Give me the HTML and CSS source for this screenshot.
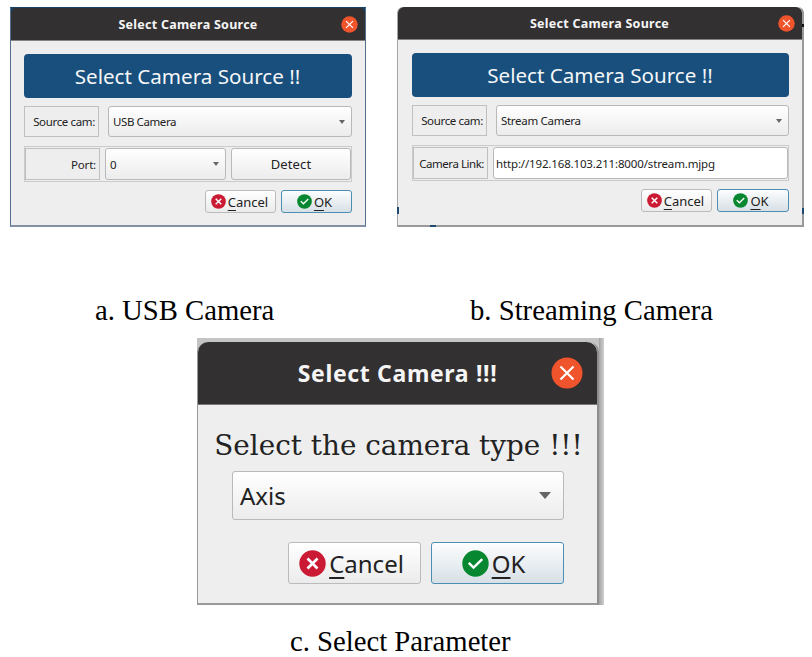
FILE: index.html
```
<!DOCTYPE html>
<html lang="en">
<head>
<meta charset="utf-8">
<title>Camera dialogs</title>
<link rel="stylesheet" href="styles.css">
</head>
<body>
<svg width="0" height="0" class="defs" aria-hidden="true">
  <symbol id="close" viewBox="0 0 32 32"><circle cx="16" cy="16" r="15.5" fill="#f0542c"/><path d="M9.5 9.5l13 13M22.5 9.5l-13 13" stroke="#fff" stroke-width="2.2" fill="none"/></symbol>
  <symbol id="no" viewBox="0 0 28 28"><circle cx="14" cy="14" r="13.7" fill="#cb1b34"/><path d="M8.8 8.8l10.4 10.4M19.2 8.8L8.800 19.2" stroke="#fff" stroke-width="2.8" fill="none"/></symbol>
  <symbol id="yes" viewBox="0 0 28 28"><circle cx="14" cy="14" r="13.7" fill="#07872f"/><path d="M7 13.300l5 5 9-8.800" stroke="#fff" stroke-width="2.5" fill="none"/></symbol>
</svg>
<main class="page">
  <div class="pair">
    <figure>
      <section class="dialog usb">
        <header class="bar"><span class="title">Select Camera Source</span><svg class="close"><use href="#close"/></svg></header>
        <div class="body">
          <div class="banner"><span>Select Camera Source !!</span></div>
          <div class="row"><div class="label"><span class="t-source">Source cam:</span></div><div class="field combo"><span class="t-usb">USB Camera</span><i class="arrow"></i></div></div>
          <div class="group"><div class="label"><span class="t-port">Port:</span></div><div class="field combo port"><span>0</span><i class="arrow"></i></div><div class="field detect"><span>Detect</span></div></div>
          <div class="actions"><div class="btn"><svg><use href="#no"/></svg><span class="t-cancel"><u>C</u>ancel</span></div><div class="btn ok"><svg><use href="#yes"/></svg><span class="t-ok"><u>O</u>K</span></div></div>
        </div>
      </section>
      <figcaption class="cap-a">a. USB Camera</figcaption>
    </figure>
    <figure>
      <section class="dialog stream">
        <header class="bar"><span class="title">Select Camera Source</span><svg class="close"><use href="#close"/></svg></header>
        <div class="body">
          <div class="banner"><span>Select Camera Source !!</span></div>
          <div class="row"><div class="label"><span class="t-source">Source cam:</span></div><div class="field combo"><span class="t-stream">Stream Camera</span><i class="arrow"></i></div></div>
          <div class="group"><div class="label"><span class="t-link">Camera Link:</span></div><div class="field input"><span class="t-url">http://192.168.103.211:8000/stream.mjpg</span></div></div>
          <div class="actions"><div class="btn"><svg><use href="#no"/></svg><span class="t-cancel"><u>C</u>ancel</span></div><div class="btn ok"><svg><use href="#yes"/></svg><span class="t-ok"><u>O</u>K</span></div></div>
        </div>
        <i class="speck s1"></i><i class="speck s2"></i><i class="speck s3"></i><i class="speck s4"></i>
      </section>
      <figcaption class="cap-b">b. Streaming Camera</figcaption>
    </figure>
  </div>
  <figure class="third">
    <div class="shade">
      <section class="large">
        <header class="bar"><span class="title">Select Camera !!!</span><svg class="close"><use href="#close"/></svg></header>
        <div class="body">
          <p class="prompt">Select the camera type !!!</p>
          <div class="field combo"><span class="t-axis">Axis</span><i class="arrow"></i></div>
          <div class="actions"><div class="btn"><svg><use href="#no"/></svg><span class="t-cancel"><u>C</u>ancel</span></div><div class="btn ok"><svg><use href="#yes"/></svg><span class="t-ok"><u>O</u>K</span></div></div>
        </div>
      </section>
    </div>
    <figcaption class="cap-c">c. Select Parameter</figcaption>
  </figure>
</main>
</body>
</html>
```
FILE: styles.css
```
* { box-sizing: border-box; }
body { margin: 0; background: #fff; overflow: hidden; font-family: "Noto Sans", sans-serif; color: #222; }
.defs { position: absolute; }
.page { width: 812px; height: 657px; padding-top: 7px; }
figure { margin: 0; }
span, figcaption, .prompt { white-space: nowrap; }
.pair { display: flex; gap: 31px; padding-left: 10px; height: 331px; }
figcaption { font: 28.7px/34px "Liberation Serif", serif; color: #000; }
.cap-a { margin: 66px 0 0 85px; }
.cap-b { margin: 66px 0 0 73px; }
.cap-c { margin: 19px 0 0 93px; }

.dialog { height: 220px; background: #eee; position: relative; font-size: 11.5px; }
.usb { width: 356px; background: linear-gradient(#174267 0 10px, #eee 10px); border: 1px solid #53718e; border-top-color: #174267; border-bottom: 2px solid #8292a3; }
.stream { width: 407px; border: 1px solid #a5a5a5; border-right: 2px solid #999; border-bottom: 2px solid #999; border-top: 0; border-radius: 6px 6px 0 0; }
.bar { display: flex; align-items: center; justify-content: center; position: relative; background: #333031; color: #f5f5f5; font-weight: 700; }
.dialog .bar { height: 33px; border-bottom: 1px solid #858381; border-radius: 5px 5px 0 0; font-size: 12.5px; letter-spacing: .26px; }
.close { position: absolute; }
.dialog .close { width: 17px; height: 17px; right: 7px; top: 8px; }
.dialog .body { padding: 13px 13px 0; }
.stream .bar { border-radius: 6px 6px 0 0; }
.stream .title { margin-right: 1px; }
.stream .body { padding: 13px 13px 0 14px; }
.banner { height: 44px; border-radius: 4px; background: #184f7c; color: #f4f6f8; font-size: 20.6px; display: flex; align-items: center; justify-content: center; }
.banner span { margin-right: 1px; }
.row { display: flex; gap: 9px; margin-top: 8px; height: 31px; }
.group { display: flex; gap: 5px; margin-top: 9px; height: 36px; padding: 1px 0; border: 1px solid #cbcbcb; }
.label { width: 75px; border: 1px solid #c0c0c0; display: flex; align-items: center; justify-content: flex-end; padding-right: 3px; }
.field { flex: 1; border: 1px solid #b9b9b9; border-radius: 3px; background: linear-gradient(#fff, #ececec); display: flex; align-items: center; padding-left: 4px; }
.combo { justify-content: space-between; padding-right: 6px; }
.arrow { border: 3.5px solid transparent; border-top: 4px solid #666; border-bottom: 0; }
.port { flex: none; width: 121px; }
.detect { justify-content: center; padding: 0; font-size: 13px; letter-spacing: .15px; }
.input { background: #fff; padding-left: 2px; }
.t-source { letter-spacing: -.35px; }
.t-usb { letter-spacing: -.4px; }
.t-stream { letter-spacing: -.3px; }
.t-link { letter-spacing: -.45px; }
.t-port { letter-spacing: -.2px; }
.t-url { letter-spacing: -.15px; }
.actions { display: flex; justify-content: flex-end; gap: 5px; margin-top: 8px; }
.btn { width: 71px; height: 23px; border: 1px solid #bbb; border-radius: 3px; background: linear-gradient(#fff, #ebebeb); display: flex; align-items: center; justify-content: center; gap: 2px; padding-right: 2px; font-size: 13px; }
.btn svg { width: 15px; height: 15px; flex: none; }
.btn.ok { border-color: #4d8fb3; background: linear-gradient(#fcfdfe, #d7e0e6); padding-right: 4px; }
.stream .btn.ok { width: 72px; }
.btn u { text-decoration-thickness: 1px; text-underline-offset: 3px; }

.speck { position: absolute; background: #214a73; }
.s1 { left: -1px; top: 200px; width: 2px; height: 7px; }
.s2 { left: 32px; top: 218px; width: 6px; height: 2px; }
.s3 { right: -2px; top: 201px; width: 2px; height: 6px; }
.s4 { right: -2px; top: 17px; width: 2px; height: 3px; background: #111; }

.third { margin-left: 197px; width: 407px; }
.shade { height: 267px; padding: 4px 5px 0 0; background: linear-gradient(90deg, #c4c4c4 0, #c4c4c4 402px, #a3a3a3 402px, #d0d0d0); }
.large { height: 263px; border: 1px solid #999; border-top: 0; border-bottom: 2px solid #999; border-right: 2px solid #8f8f8f; border-radius: 10px 10px 0 0; background: #eee; font-size: 24px; }
.large .bar { height: 63px; border-bottom: 1px solid #777; border-radius: 10px 10px 0 0; font-size: 23px; letter-spacing: .65px; }
.large .close { width: 32px; height: 32px; right: 14px; top: 15px; }
.large .body { padding: 0 33px 0 34px; }
.prompt { font: 27.85px/32px "DejaVu Serif", serif; margin: 25px -20px 0 -19px; text-align: center; }
.large .field { height: 49px; margin-top: 9px; padding-left: 7px; padding-right: 12px; }
.large .arrow { border-width: 7px 6.5px 0; }
.large .actions { margin-top: 22px; gap: 10px; }
.large .btn { width: 133px; height: 42px; gap: 3px; padding-right: 6px; font-size: 24px; }
.large .btn.ok { padding-right: 8px; }
.large .btn svg { width: 27px; height: 27px; }
.large .btn u { text-decoration-thickness: 2px; text-underline-offset: 4px; }
```
